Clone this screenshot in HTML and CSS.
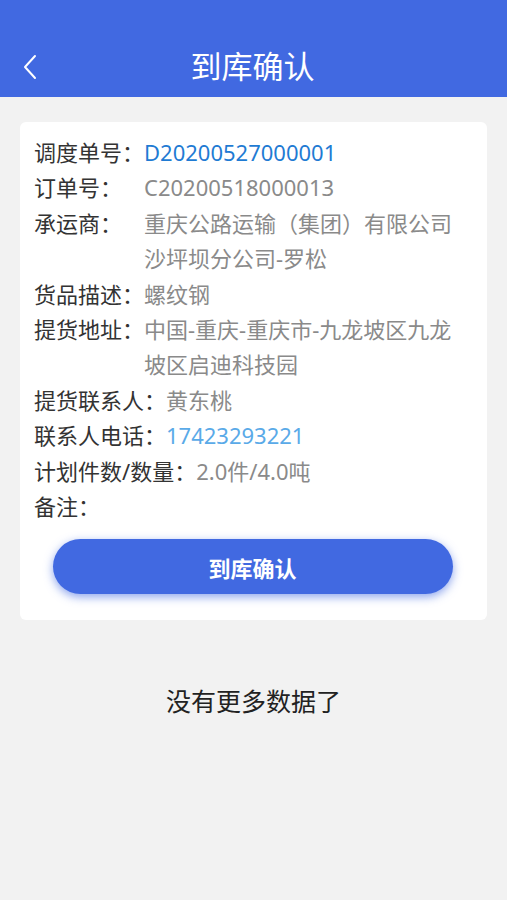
FILE: index.html
```html
<!DOCTYPE html>
<html lang="zh-CN">
<head>
  <meta charset="UTF-8" />
  <meta name="viewport" content="width=device-width, initial-scale=1.0"/>
  <title>到库确认</title>
  <link rel="stylesheet" href="styles.css">
</head>
<body>
  <!-- top bar -->
  <div class="navbar">
    <div class="nav-inner">
      <span class="back">
        <svg width="16" height="26" viewBox="0 0 16 26"><path d="M13 2 L3 13 L13 24" fill="none" stroke="#fff" stroke-width="2" stroke-linecap="round" stroke-linejoin="round"/></svg>
      </span>
      <div class="nav-title">到库确认</div>
    </div>
  </div>

  <div class="card">
    <div class="row"><span class="label">调度单号：</span><span class="value blue">D20200527000001</span></div>
    <div class="row"><span class="label">订单号：</span><span class="value">C20200518000013</span></div>
    <div class="row"><span class="label">承运商：</span><span class="value">重庆公路运输（集团）有限公司沙坪坝分公司-罗松</span></div>
    <div class="row"><span class="label">货品描述：</span><span class="value">螺纹钢</span></div>
    <div class="row"><span class="label">提货地址：</span><span class="value">中国-重庆-重庆市-九龙坡区九龙坡区启迪科技园</span></div>
    <div class="row"><span class="label">提货联系人：</span><span class="value">黄东桃</span></div>
    <div class="row"><span class="label">联系人电话：</span><span class="value phone">17423293221</span></div>
    <div class="row"><span class="label">计划件数/数量：</span><span class="value">2.0件/4.0吨</span></div>
    <div class="row"><span class="label">备注：</span><span class="value"></span></div>
    <button class="confirm-btn">到库确认</button>
  </div>

  <div class="no-more">没有更多数据了</div>
</body>
</html>
```

FILE: styles.css
```css
html, body {
  margin: 0;
  padding: 0;
  background: #f2f2f2;
  font-family: "Noto Sans", "Noto Sans CJK SC", sans-serif;
  height: 100%;
}

.navbar {
  background: #4169e1;
  padding-top: 40px;
}

.nav-inner {
  position: relative;
  height: 57px;
  display: flex;
  align-items: center;
  justify-content: center;
}

.back {
  position: absolute;
  left: 22px;
  top: 14px;
  display: flex;
}

.nav-title {
  color: #fff;
  font-size: 31px;
  line-height: 40px;
  margin-top: -5px;
  margin-left: -2px;
}

.card {
  background: #fff;
  margin: 25px 20px 0;
  border-radius: 6px;
  padding: 13px 16px 26px 14px;
}

.row {
  display: flex;
  font-size: 22px;
  line-height: 35.4px;
}

.label {
  color: #333;
  flex-shrink: 0;
  min-width: 110px;
}

.value {
  color: #8a8a8a;
}

.value.blue {
  color: #1f7bd3;
}

.value.phone {
  color: #5aaae8;
}

.confirm-btn {
  display: block;
  width: 400px;
  height: 55px;
  margin: 15px auto 0;
  border: none;
  border-radius: 28px;
  background: #4169e1;
  color: #fff;
  font-family: inherit;
  font-size: 22px;
  font-weight: bold;
  box-shadow: 0 3px 10px rgba(65, 105, 225, 0.6);
}

.no-more {
  text-align: center;
  margin-top: 64px;
  font-size: 25px;
  line-height: 34px;
  color: #222;
}
```
